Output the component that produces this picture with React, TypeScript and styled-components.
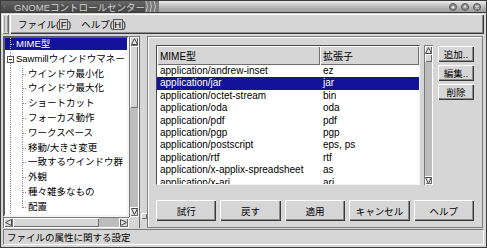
import React from 'react';
import styled, { createGlobalStyle, css } from 'styled-components';

const FACE = '#d6d6d6';
const SEL = '#12129a';
const FONT = `"Liberation Sans", "Noto Sans CJK JP", sans-serif`;
const JP = '9.5px';

const GlobalStyle = createGlobalStyle`
  html, body { margin: 0; padding: 0; background: ${FACE}; }
  body { font-family: ${FONT}; }
`;

const raised = css`
  box-shadow: inset 1px 1px #ffffff, inset -1px -1px #3a3a3a, inset -2px -2px #8c8c8c;
`;
const thinRaised = css`
  box-shadow: inset 1px 1px #ffffff, inset -1px -1px #6e6e6e;
`;

const Window = styled.div`
  width: 487px;
  height: 248px;
  box-sizing: border-box;
  border: 1px solid #3c3c3c;
  display: flex;
  flex-direction: column;
  background: ${FACE};
  font-family: ${FONT};
  font-size: 10px;
  color: #000;
  overflow: hidden;
`;

/* ---------- title bar ---------- */
const TitleBar = styled.div`
  height: 11px;
  flex: 0 0 11px;
  display: flex;
  align-items: stretch;
  background: linear-gradient(#ececec, #b4b4b4 60%, #9c9c9c);
  border-bottom: 1px solid #3c3c3c;
`;
const TitleLabel = styled.div`
  width: 144px;
  box-sizing: border-box;
  display: flex;
  align-items: center;
  gap: 9px;
  padding-left: 3px;
  background: linear-gradient(#646464, #444444);
  color: #d4d4d4;
  font-size: 9.5px;
  white-space: nowrap;
  overflow: hidden;
`;
const TitleSpacer = styled.div`
  flex: 1;
`;
const TitleButtons = styled.div`
  display: flex;
  align-items: center;
  gap: 4px;
  padding-right: 5px;
`;

/* ---------- menu bar ---------- */
const MenuBar = styled.div`
  height: 22px;
  flex: 0 0 22px;
  box-sizing: border-box;
  display: flex;
  gap: 1px;
  padding: 1px 2px 1px 1px;
`;
const Grip = styled.div`
  width: 7px;
  ${thinRaised};
  background: repeating-linear-gradient(90deg, ${FACE} 0 2px, #9a9a9a 2px 3px);
  background-clip: content-box;
  padding: 2px 1px;
  box-sizing: border-box;
`;
const MenuStrip = styled.div`
  flex: 1;
  display: flex;
  align-items: center;
  gap: 10px;
  padding-left: 8px;
  ${raised};
`;
const MenuItem = styled.span`
  font-size: ${JP};
  white-space: nowrap;
  & u {
    text-decoration: none;
    border: 1px solid #555;
    padding: 0 0.5px;
    line-height: 9px;
    display: inline-block;
  }
`;

/* ---------- main ---------- */
const Main = styled.div`
  flex: 1;
  min-height: 0;
  display: flex;
  padding: 1px 3px 0 2px;
`;
const LeftPane = styled.div`
  width: 136px;
  display: flex;
  flex-direction: column;
`;
const TreeRow = styled.div`
  flex: 1;
  min-height: 0;
  display: flex;
`;
const TreeBox = styled.div`
  width: 126px;
  box-sizing: border-box;
  border: 2px solid;
  border-color: #5e5e5e #f4f4f4 #f4f4f4 #5e5e5e;
  background: #fff;
  overflow: hidden;
`;
const TreeItem = styled.div<{ $selected?: boolean }>`
  height: 14.8px;
  display: flex;
  align-items: flex-start;
  white-space: nowrap;
  color: ${p => (p.$selected ? '#fff' : '#000')};
  background: ${p => (p.$selected ? `linear-gradient(${SEL}, ${SEL})` : 'none')};
  background-size: 100% 12px;
  background-repeat: no-repeat;
`;
const TreeLabel = styled.span`
  line-height: 12px;
  font-size: ${JP};
`;

const Scrollbar = styled.div<{ $vertical: boolean }>`
  display: flex;
  flex-direction: ${p => (p.$vertical ? 'column' : 'row')};
  box-sizing: border-box;
  padding: 1px;
  background: #bdbdbd;
  box-shadow: inset 1px 1px #7a7a7a, inset -1px -1px #ffffff;
`;
const Stepper = styled.div<{ $size: number }>`
  flex: 0 0 ${p => p.$size}px;
  display: flex;
  align-items: center;
  justify-content: center;
  background: ${FACE};
  ${thinRaised};
`;
const Thumb = styled.div<{ $size: number }>`
  flex: 0 0 ${p => p.$size}px;
  background: ${FACE};
  ${thinRaised};
`;
const Trough = styled.div`
  flex: 1;
`;
const TreeVScroll = styled(Scrollbar)`
  width: 10px;
`;
const HScroll = styled(Scrollbar)`
  width: 126px;
  height: 11px;
  flex: 0 0 11px;
`;

const PaneHandle = styled.div`
  width: 8px;
  display: flex;
  flex-direction: column;
  justify-content: flex-end;
  align-items: center;
  padding-bottom: 9px;
  box-sizing: border-box;
  border-left: 1px solid #6a6a6a;
`;
const PaneGrip = styled.div`
  width: 6px;
  height: 6px;
  background: ${FACE};
  ${thinRaised};
`;

const RightFrame = styled.div`
  flex: 1;
  box-sizing: border-box;
  border: 1px solid #7e7e7e;
  box-shadow: inset 1px 1px #ffffff;
  padding: 8px 8px 6px 8px;
  display: flex;
  flex-direction: column;
  gap: 15px;
`;
const TopRow = styled.div`
  height: 140px;
  display: flex;
`;
const ListBox = styled.div`
  width: 264px;
  box-sizing: border-box;
  border: 1px solid;
  border-color: #4a4a4a #f4f4f4 #f4f4f4 #4a4a4a;
  background: #fff;
  display: flex;
  flex-direction: column;
  overflow: hidden;
`;
const HeaderRow = styled.div`
  flex: 0 0 19px;
  display: grid;
  grid-template-columns: 163px 1fr;
  background: ${FACE};
`;
const HeaderCell = styled.div`
  display: flex;
  align-items: center;
  padding-left: 3px;
  ${thinRaised};
`;
const ListRow = styled.div<{ $selected?: boolean }>`
  flex: 0 0 12.4px;
  display: grid;
  grid-template-columns: 163px 1fr;
  line-height: 12.4px;
  background: ${p => (p.$selected ? SEL : 'transparent')};
  color: ${p => (p.$selected ? '#fff' : '#000')};
`;
const Cell = styled.div`
  padding-left: 3px;
  white-space: nowrap;
  overflow: hidden;
`;
const ListVScroll = styled(Scrollbar)`
  width: 9px;
  margin-left: 4px;
`;
const SideButtons = styled.div`
  width: 36px;
  margin-left: 5px;
  padding-top: 1px;
  display: flex;
  flex-direction: column;
  gap: 3px;
`;
const SmallButton = styled.div`
  height: 16px;
  display: flex;
  align-items: center;
  justify-content: center;
  background: ${FACE};
  ${raised};
  font-size: ${JP};
  white-space: nowrap;
`;
const BottomButtons = styled.div`
  height: 21px;
  display: grid;
  grid-template-columns: repeat(5, 1fr);
  gap: 4px;
`;
const ActionButton = styled.div`
  display: flex;
  align-items: center;
  justify-content: center;
  background: ${FACE};
  ${raised};
  font-size: ${JP};
`;

/* ---------- status ---------- */
const StatusBar = styled.div`
  height: 19px;
  flex: 0 0 19px;
  box-sizing: border-box;
  padding: 1px 2px 2px 2px;
  display: flex;
`;
const StatusField = styled.div`
  flex: 1;
  display: flex;
  align-items: center;
  padding-left: 3px;
  border: 1px solid;
  border-color: #7a7a7a #fff #fff #7a7a7a;
  font-size: ${JP};
`;

/* ---------- drawings ---------- */
function Arrow({ dir }: { dir: 'up' | 'down' | 'left' | 'right' }) {
  const pts = {
    up: '3.5,0.5 6.5,6.5 0.5,6.5',
    down: '0.5,0.5 6.5,0.5 3.5,6.5',
    left: '0.5,3.5 6.5,0.5 6.5,6.5',
    right: '6.5,3.5 0.5,0.5 0.5,6.5',
  }[dir];
  return (
    <svg width="7" height="7" viewBox="0 0 7 7">
      <polygon points={pts} fill="#e6e6e6" stroke="#4a4a4a" strokeWidth="1" />
    </svg>
  );
}

type Kind = 'root' | 'expander' | 'child' | 'last';

function Guides({ kind, light }: { kind: Kind; light?: boolean }) {
  const c = light ? '#c8c8ff' : '#8a8a8a';
  const h = 14.8;
  const w = kind === 'root' || kind === 'expander' ? 11 : 23;
  return (
    <svg width={w} height={h} viewBox={`0 0 ${w} ${h}`} style={{ flex: '0 0 auto' }}>
      {kind === 'expander' ? (
        <>
          <line x1="5.5" y1="0" x2="5.5" y2="3" stroke={c} strokeDasharray="1 1" />
          <line x1="5.5" y1="10" x2="5.5" y2={h} stroke={c} strokeDasharray="1 1" />
          <rect x="2.5" y="3.5" width="6" height="6" fill="#fff" stroke="#555" />
          <line x1="4" y1="6.5" x2="7" y2="6.5" stroke="#222" />
        </>
      ) : (
        <line x1="5.5" y1="0" x2="5.5" y2={h} stroke={c} strokeDasharray="1 1" />
      )}
      {kind === 'root' && <line x1="6" y1="6.5" x2="10" y2="6.5" stroke={c} strokeDasharray="1 1" />}
      {(kind === 'child' || kind === 'last') && (
        <>
          <line x1="17.5" y1="0" x2="17.5" y2={kind === 'last' ? 7 : h} stroke={c} strokeDasharray="1 1" />
          <line x1="18" y1="6.5" x2="22" y2="6.5" stroke={c} strokeDasharray="1 1" />
        </>
      )}
    </svg>
  );
}

function WinButton({ sym }: { sym: 'min' | 'max' | 'close' }) {
  return (
    <svg width="8" height="8" viewBox="0 0 8 8">
      <circle cx="4" cy="4" r="3.5" fill="#8c8c8c" stroke="#5a5a5a" />
      {sym === 'min' && <circle cx="4" cy="4.3" r="1.4" fill="#e4e4e4" />}
      {sym === 'max' && <polygon points="4,1.8 6,4.6 2,4.6" fill="#e4e4e4" />}
      {sym === 'close' && (
        <path d="M2.5 2.5 L5.5 5.5 M5.5 2.5 L2.5 5.5" stroke="#e4e4e4" strokeWidth="1.1" />
      )}
    </svg>
  );
}

const treeItems: { label: string; kind: Kind; selected?: boolean }[] = [
  { label: 'MIME型', kind: 'root', selected: true },
  { label: 'Sawmillウインドウマネー', kind: 'expander' },
  { label: 'ウインドウ最小化', kind: 'child' },
  { label: 'ウインドウ最大化', kind: 'child' },
  { label: 'ショートカット', kind: 'child' },
  { label: 'フォーカス動作', kind: 'child' },
  { label: 'ワークスペース', kind: 'child' },
  { label: '移動/大きさ変更', kind: 'child' },
  { label: '一致するウインドウ群', kind: 'child' },
  { label: '外観', kind: 'child' },
  { label: '種々雑多なもの', kind: 'child' },
  { label: '配置', kind: 'last' },
];

const mimeRows: [string, string][] = [
  ['application/andrew-inset', 'ez'],
  ['application/jar', 'jar'],
  ['application/octet-stream', 'bin'],
  ['application/oda', 'oda'],
  ['application/pdf', 'pdf'],
  ['application/pgp', 'pgp'],
  ['application/postscript', 'eps, ps'],
  ['application/rtf', 'rtf'],
  ['application/x-applix-spreadsheet', 'as'],
  ['application/x-ari', 'ari'],
];

export default function App() {
  return (
    <>
      <GlobalStyle />
      <Window>
        <TitleBar>
          <TitleLabel>
            <svg width="7" height="7" viewBox="0 0 7 7">
              <circle cx="3.5" cy="3.5" r="3" fill="#9a9a9a" stroke="#dcdcdc" />
              <circle cx="3.5" cy="3.5" r="1.2" fill="#5a5a5a" />
            </svg>
            <span>GNOMEコントロールセンター</span>
          </TitleLabel>
          <svg width="14" height="11" viewBox="0 0 14 11">
            <rect width="14" height="11" fill="#7a7a7a" />
            <path d="M1 0 Q4 5.5 1 11 M5 0 Q8 5.5 5 11 M9 0 Q12 5.5 9 11" stroke="#c8c8c8" fill="none" />
          </svg>
          <TitleSpacer />
          <TitleButtons>
            <WinButton sym="min" />
            <WinButton sym="max" />
            <WinButton sym="close" />
          </TitleButtons>
        </TitleBar>

        <MenuBar>
          <Grip />
          <MenuStrip>
            <MenuItem>
              ファイル(<u>F</u>)
            </MenuItem>
            <MenuItem>
              ヘルプ(<u>H</u>)
            </MenuItem>
          </MenuStrip>
        </MenuBar>

        <Main>
          <LeftPane>
            <TreeRow>
              <TreeBox>
                {treeItems.map(it => (
                  <TreeItem key={it.label} $selected={it.selected}>
                    <Guides kind={it.kind} light={it.selected} />
                    <TreeLabel>{it.label}</TreeLabel>
                  </TreeItem>
                ))}
              </TreeBox>
              <TreeVScroll $vertical>
                <Stepper $size={9}>
                  <Arrow dir="up" />
                </Stepper>
                <Thumb $size={62} />
                <Trough />
                <Stepper $size={9}>
                  <Arrow dir="down" />
                </Stepper>
              </TreeVScroll>
            </TreeRow>
            <HScroll $vertical={false}>
              <Stepper $size={9}>
                <Arrow dir="left" />
              </Stepper>
              <Thumb $size={86} />
              <Trough />
              <Stepper $size={9}>
                <Arrow dir="right" />
              </Stepper>
            </HScroll>
          </LeftPane>

          <PaneHandle>
            <PaneGrip />
          </PaneHandle>

          <RightFrame>
            <TopRow>
              <ListBox>
                <HeaderRow>
                  <HeaderCell>MIME型</HeaderCell>
                  <HeaderCell>拡張子</HeaderCell>
                </HeaderRow>
                {mimeRows.map(([t, e]) => (
                  <ListRow key={t} $selected={t === 'application/jar'}>
                    <Cell>{t}</Cell>
                    <Cell>{e}</Cell>
                  </ListRow>
                ))}
              </ListBox>
              <ListVScroll $vertical>
                <Stepper $size={8}>
                  <Arrow dir="up" />
                </Stepper>
                <Thumb $size={8} />
                <Trough />
                <Stepper $size={8}>
                  <Arrow dir="down" />
                </Stepper>
              </ListVScroll>
              <SideButtons>
                <SmallButton>追加..</SmallButton>
                <SmallButton>編集..</SmallButton>
                <SmallButton>削除</SmallButton>
              </SideButtons>
            </TopRow>
            <BottomButtons>
              <ActionButton>試行</ActionButton>
              <ActionButton>戻す</ActionButton>
              <ActionButton>適用</ActionButton>
              <ActionButton>キャンセル</ActionButton>
              <ActionButton>ヘルプ</ActionButton>
            </BottomButtons>
          </RightFrame>
        </Main>

        <StatusBar>
          <StatusField>ファイルの属性に関する設定</StatusField>
        </StatusBar>
      </Window>
    </>
  );
}
